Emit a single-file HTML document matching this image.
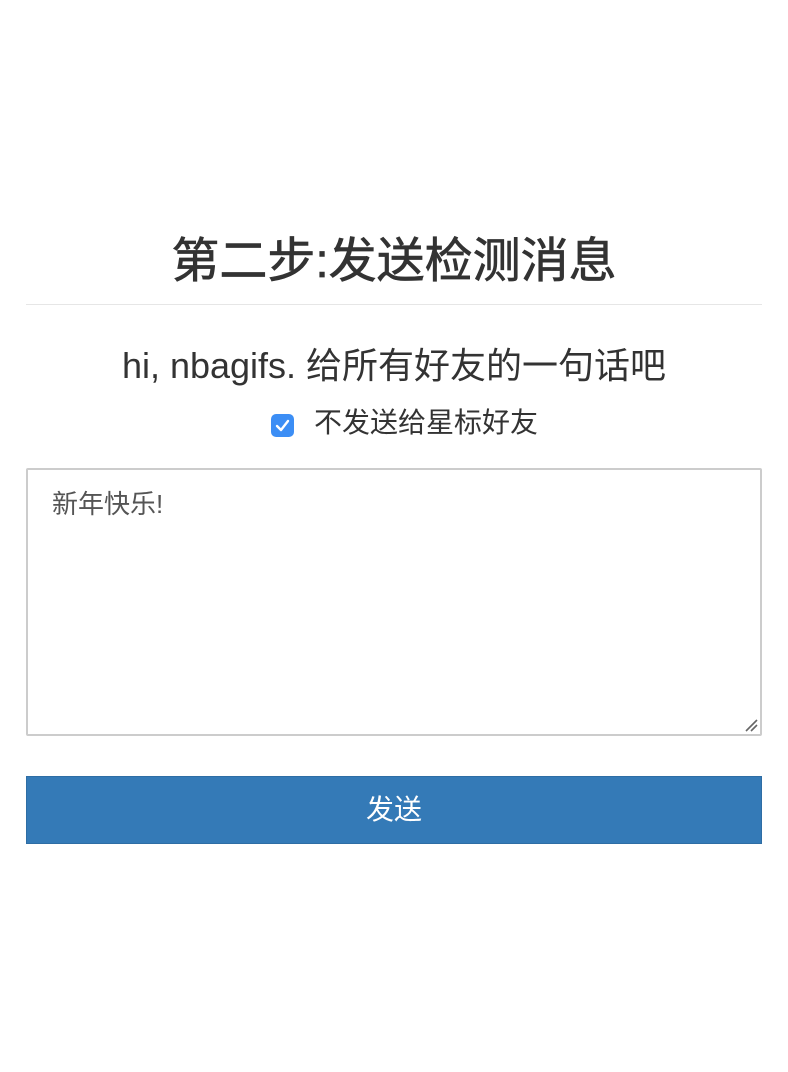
<!DOCTYPE html>
<html><head><meta charset="utf-8"><style>
html,body{margin:0;padding:0;background:#fff;width:788px;height:1072px;overflow:hidden}
body{font-family:"Liberation Sans","Noto Sans CJK SC",sans-serif;color:#333}
h1{position:absolute;top:232px;left:0;width:788px;text-align:center;margin:0;font-size:48px;font-weight:normal;-webkit-text-stroke:0.7px #333;line-height:60px}
.hr{position:absolute;top:304px;left:26px;width:736px;height:1px;background:#e6e6e6}
h3{position:absolute;top:341px;left:0;width:788px;text-align:center;margin:0;font-size:36px;font-weight:normal;line-height:50px}
.cb{position:absolute;top:414px;left:271px;width:23px;height:23px;border-radius:5px;background:#3c8ef5}
.lbl{position:absolute;top:403px;left:314px;font-size:28px;line-height:40px}
.ta{position:absolute;top:468px;left:26px;width:732px;height:264px;border:2px solid #ccc;border-radius:2px;}
.ta span{position:absolute;left:24px;top:14px;font-size:26px;color:#555}
.btn{position:absolute;top:776px;left:26px;width:734px;height:66px;background:#347ab7;border:1px solid #2e6da4;color:#fff;font-size:28px;text-align:center;line-height:66px}
</style></head><body>
<h1>第二步:发送检测消息</h1>
<div class="hr"></div>
<h3>hi, nbagifs. 给所有好友的一句话吧</h3>
<div class="cb"><svg width="23" height="23" viewBox="0 0 23 23"><path d="M6 12 L10 16 L17 7" stroke="#fff" stroke-width="2.4" fill="none" stroke-linecap="round" stroke-linejoin="round"/></svg></div>
<div class="lbl">不发送给星标好友</div>
<div class="ta"><span>新年快乐!</span>
<svg style="position:absolute;right:2px;bottom:2px" width="14" height="14" viewBox="0 0 14 14"><path d="M2 13 L13 2 M7 13 L13 7" stroke="#666" stroke-width="1.6"/></svg></div>
<div class="btn">发送</div>
</body></html>
